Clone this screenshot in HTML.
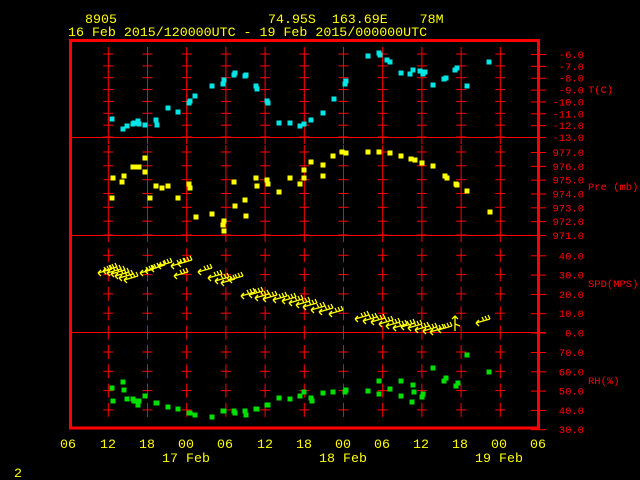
<!DOCTYPE html>
<html><head><meta charset="utf-8"><style>
html,body{margin:0;padding:0;background:#000;width:640px;height:480px;overflow:hidden}
svg{display:block}
text{font-family:"Liberation Mono",monospace;font-size:13.3px;white-space:pre}
text.s{font-size:10.5px}
.y{fill:#ffff00}.r{fill:#ff0000}
</style></head><body>
<svg width="640" height="480" viewBox="0 0 640 480" xmlns="http://www.w3.org/2000/svg" xml:space="preserve">
<defs>
<g id="c" stroke="#ff0000" stroke-width="1"><line x1="0" y1="-7" x2="0" y2="7"/><line x1="-5" y1="0" x2="5" y2="0"/></g>
<g id="w" stroke="#ffff00" stroke-width="1.3" fill="none"><path d="M-7 0 L7 -4 M-7 0 L-4 -3 M-7 0 L-4 3 M7 -4 L5 -8 M4 -3 L2 -7 M1 -2 L-1 -6"/></g>
</defs>
<text class="y" x="85" y="23">8905</text>
<text class="y" x="268" y="23">74.95S  163.69E    78M</text>
<text class="y" x="68" y="36">16 Feb 2015/120000UTC - 19 Feb 2015/000000UTC</text>
<g stroke="#ff0000" fill="none">
<rect x="70.5" y="40.5" width="468" height="387.5" stroke-width="3"/>
<line x1="70" y1="137.5" x2="545" y2="137.5"/>
<line x1="70" y1="235.5" x2="545" y2="235.5"/>
<line x1="70" y1="332.5" x2="545" y2="332.5"/>
</g>
<g id="grid"></g>
<g id="pts"></g>
<g class="r" text-anchor="end" id="lab"></g>
<text class="r s" x="588" y="93">T(C)</text>
<text class="r s" x="588" y="190">Pre (mb)</text>
<text class="r s" x="588" y="287">SPD(MPS)</text>
<text class="r s" x="588" y="384">RH(%)</text>
<g class="y" text-anchor="middle">
<text x="68" y="448">06</text><text x="108" y="448">12</text><text x="147" y="448">18</text><text x="186" y="448">00</text><text x="225" y="448">06</text><text x="265" y="448">12</text><text x="304" y="448">18</text><text x="343" y="448">00</text><text x="382" y="448">06</text><text x="421" y="448">12</text><text x="460" y="448">18</text><text x="499" y="448">00</text><text x="538" y="448">06</text>
<text x="186" y="462">17 Feb</text><text x="343" y="462">18 Feb</text><text x="499" y="462">19 Feb</text>
</g>
<text class="y" x="14" y="477">2</text>
</svg>
<script>
var NS="http://www.w3.org/2000/svg";
function el(p,t,a){var e=document.createElementNS(NS,t);for(var k in a)e.setAttribute(k,a[k]);p.appendChild(e);return e;}
var g=document.getElementById("grid"),lab=document.getElementById("lab"),pts=document.getElementById("pts");
var rows=[],labels=[];
for(var k=0;k<8;k++){rows.push(54+11.86*k);labels.push([54+11.86*k,(-6-k).toFixed(1)]);}
for(var k=0;k<7;k++){rows.push(152+13.83*k);labels.push([152+13.83*k,(977-k).toFixed(1)]);}
for(var k=0;k<5;k++){rows.push(255.3+19.3*k);labels.push([255.3+19.3*k,(40-10*k).toFixed(1)]);}
for(var k=0;k<5;k++){var y=352+19.3*k;if(k<4)rows.push(y);labels.push([y,(70-10*k).toFixed(1)]);}
for(var i=0;i<11;i++){var x=108.3+39.2*i;rows.forEach(function(y){el(g,"use",{href:"#c",x:x.toFixed(1),y:y.toFixed(1)});});}
labels.forEach(function(l){el(g,"line",{x1:531,x2:546,y1:l[0]+0.5,y2:l[0]+0.5,stroke:"#ff0000"});var t=el(lab,"text",{x:584,y:l[0]+4,"class":"s"});t.textContent=l[1];});
function sq(list,col){list.forEach(function(p){el(pts,"rect",{x:p[0]-2.5,y:p[1]-2.5,width:5,height:5,fill:col});});}
sq([[112,119],[123,129],[127,126],[133,124],[134,123],[138,121],[139,124],[145,125],[156,120],[157,125],[168,108],[178,112],[189,103],[190,101],[195,96],[212,86],[223,84],[224,80],[234,75],[235,73],[245,76],[246,75],[256,86],[257,89],[267,101],[268,103],[279,123],[290,123],[300,126],[304,124],[311,120],[323,113],[334,99],[345,84],[346,81],[368,56],[379,53],[380,55],[387,60],[390,62],[401,73],[410,74],[413,70],[420,71],[423,74],[425,72],[433,85],[444,79],[446,78],[455,70],[457,68],[467,86],[489,62]],"#00e5e5");
sq([[112,198],[113,178],[122,182],[124,176],[133,167],[136,167],[139,167],[145,158],[145,172],[150,198],[156,186],[162,188],[168,186],[178,198],[189,184],[190,188],[196,217],[212,214],[223,225],[224,231],[224,221],[234,182],[235,206],[245,200],[246,216],[256,178],[257,186],[267,180],[268,184],[279,192],[290,178],[300,184],[304,170],[304,178],[311,162],[323,176],[323,165],[333,156],[342,152],[346,153],[368,152],[379,152],[390,153],[401,156],[411,159],[415,160],[422,163],[433,166],[445,176],[447,178],[456,184],[457,185],[467,191],[490,212]],"#ffff00");
sq([[112,388],[113,401],[123,382],[124,390],[127,399],[133,399],[134,401],[139,401],[138,405],[145,396],[156,403],[157,403],[168,407],[178,409],[189,413],[190,413],[195,415],[212,417],[223,411],[224,411],[235,413],[234,411],[245,411],[246,415],[256,409],[257,409],[267,405],[268,405],[279,398],[290,399],[300,396],[304,392],[311,398],[312,401],[323,393],[333,392],[345,392],[346,390],[368,391],[379,381],[379,394],[390,389],[401,381],[401,396],[412,402],[413,385],[414,392],[422,397],[423,394],[433,368],[444,381],[446,378],[456,386],[458,383],[467,355],[489,372]],"#00e000");
[[105,273],[110,271],[114,273],[118,274],[122,276],[126,278],[131,280],[147,273],[152,271],[158,269],[165,266],[178,266],[185,264],[181,276],[205,272],[215,278],[222,281],[228,283],[236,280],[248,296],[256,295],[262,298],[270,299],[280,300],[289,301],[296,303],[303,305],[310,307],[318,310],[326,312],[336,314],[362,319],[370,321],[378,322],[386,324],[393,326],[400,328],[408,327],[415,328],[422,330],[430,331],[437,332],[445,330],[483,323]].forEach(function(p){el(pts,"use",{href:"#w",x:p[0],y:p[1]});});
el(pts,"path",{d:"M455 331 L455 316 M452 319 L455 316 L458 319 M455 324 L460 326",stroke:"#ffff00",fill:"none","stroke-width":"1.3"});
</script>
</body></html>
